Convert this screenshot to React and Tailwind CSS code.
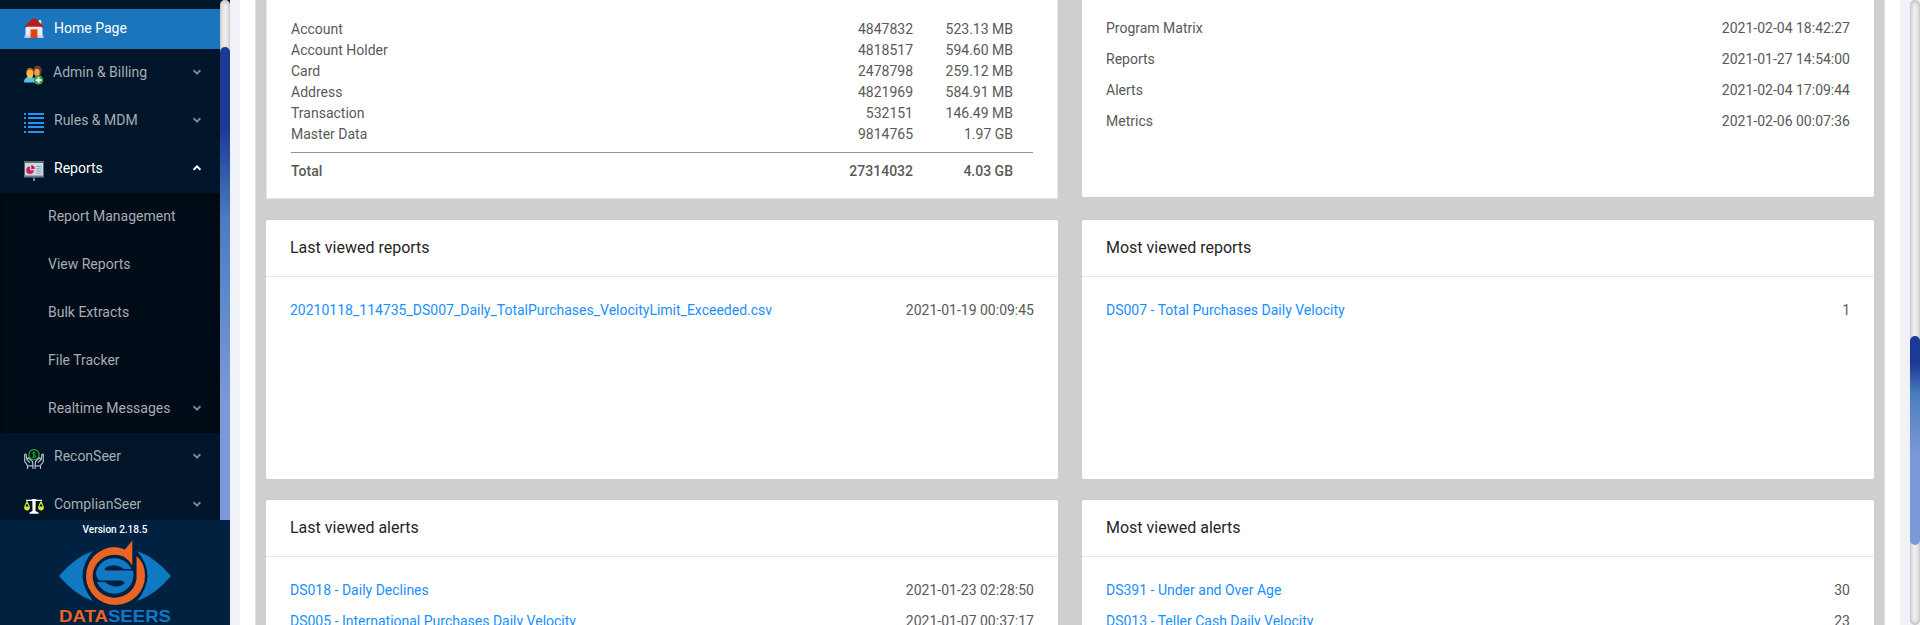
import React from "react";

function HomeIcon() {
  return (
    <svg viewBox="0 0 20 20" className="h-5 w-5 shrink-0">
      <rect x="14.800" y="2" width="2.400" height="6" fill="#d9dcf0" />
      <path d="M1.500 10 10 2l8.500 8v9.500h-17z" fill="#e9ebf6" />
      <rect x="0.500" y="17.500" width="19" height="2.500" fill="#c5c9ea" />
      <path d="M0 8.800 8.500.8Q10-.4 11.500.8L20 8.800z" fill="#b71c1c" />
      <rect x="6.500" y="11.300" width="7" height="8.700" fill="#e65100" />
      <rect x="8" y="12.600" width="4" height="7.400" fill="#d84315" />
    </svg>
  );
}

function UsersIcon() {
  return (
    <svg viewBox="0 0 20 20" className="h-5 w-5 shrink-0">
      <path d="M10 16q0-5 4-5h1q4 0 4 5z" fill="#1976d2" />
      <ellipse cx="13.500" cy="6" rx="4.300" ry="5.500" fill="#6d3b22" />
      <ellipse cx="13" cy="7.500" rx="2.700" ry="3.700" fill="#f0a050" />
      <path d="M0 17.500q0-5 4-5.500h3q5 .5 5 5.500z" fill="#4fc3f7" />
      <ellipse cx="6" cy="7.500" rx="4" ry="4.700" fill="#a86519" />
      <ellipse cx="6" cy="9" rx="3.200" ry="4.200" fill="#ffb74d" />
      <circle cx="14.500" cy="15" r="4.700" fill="#43a047" />
      <path d="M13.700 12.200h1.700v2h2v1.700h-2v2h-1.700v-2h-2v-1.700h2z" fill="#fff" />
    </svg>
  );
}

function ListIcon() {
  return (
    <svg viewBox="0 0 20 20" className="h-5 w-5 shrink-0">
      {[0, 4, 9, 13, 18].map((y) => (
        <g key={y} fill="#2196f3">
          <rect x="0" y={y} width="2" height="2" />
          <rect x="4" y={y} width="16" height="2" />
        </g>
      ))}
    </svg>
  );
}

function ReportIcon() {
  return (
    <svg viewBox="0 0 20 20" className="h-5 w-5 shrink-0">
      <rect x="9.200" y="15" width="1.600" height="3" fill="#546e7a" />
      <rect x="9" y="17.700" width="2" height="2.300" fill="#78909c" />
      <rect x="0.600" y="1" width="18.800" height="15" fill="#cfd8dc" />
      <rect x="0" y="0" width="20" height="2" fill="#546e7a" />
      <rect x="0" y="14.500" width="20" height="2" fill="#607d8b" />
      <path d="M6 5.500a3.800 3.800 0 1 0 3.800 3.800H6z" fill="#d81b60" />
      <path d="M7.200 4.200a3.800 3.800 0 0 1 3.600 3.800H7.200z" fill="#c2185b" />
      <path d="M12.300 5.500h5M12.300 7.800h5M12.300 10h5M12.300 12.200h5" stroke="#90a4ae" strokeWidth="1" />
    </svg>
  );
}

function HandsIcon() {
  return (
    <svg viewBox="0 0 20 20" className="h-5 w-5 shrink-0" fill="none">
      <circle cx="10" cy="5.700" r="5.100" stroke="#2ba32b" strokeWidth="1.300" />
      <path
        d="M11.600 3.700q-3.200-1.200-3.200.5c0 1.500 3.300 1.200 3.300 2.900 0 1.600-2.100 1.500-3.500.8M10 2.500v6.500"
        stroke="#2ba32b"
        strokeWidth="1"
      />
      <path
        d="M3.500 20v-3.500L.7 12.500V5.500Q1.800 4.500 2.200 6l.6 4.500 3.200 3.200M3.500 10l1-1.200 4 3.700.4 4V20M3.500 16.800h5.400M16.500 20v-3.500l2.800-4V5.500q-1.100-1-1.500.5l-.6 4.500L14 13.700M16.500 10l-1-1.200-4 3.700-.4 4V20M11.100 16.800h5.400"
        stroke="#b4bcc5"
        strokeWidth="1.200"
      />
    </svg>
  );
}

function ScalesIcon() {
  return (
    <svg viewBox="0 0 20 20" className="h-5 w-5 shrink-0" fill="none">
      <path d="M2 2.800h5L8.500 2h3L13 2.800h5v1.200h-6.300L11.500 14l3 1.500v1.200h-9v-1.200l3-1.500L8.300 4H2z" fill="#fff" />
      <path d="M3 4.500.8 9.800M3 4.500l2.200 5.300M17 4.500l-2.200 5.300M17 4.500l2.200 5.300" stroke="#cddc39" strokeWidth="1.200" />
      <path d="M0 9.500h6Q6 13.500 3 13.500T0 9.500zM14 9.500h6q0 4-3 4t-3-4z" fill="#dbe82c" />
    </svg>
  );
}

function Chevron({ up }) {
  return (
    <svg viewBox="0 0 8 6" className="mr-[19px] h-1.5 w-2 shrink-0" fill="none">
      <path
        d={up ? "M.6 4.800 4 1.400l3.400 3.400" : "M.6 1.200 4 4.600l3.400-3.400"}
        stroke={up ? "#ffffff" : "#7d8791"}
        strokeWidth="2"
      />
    </svg>
  );
}

function MenuItem({ icon, label, open, tight }) {
  return (
    <div className={`flex h-12 items-center pl-6 ${open ? "text-white" : "text-[#a6adb4]"}`}>
      <span className="pt-1.5">{icon}</span>
      <span className={`flex-1 ${tight ? "ml-[9px]" : "ml-2.5"}`}>{label}</span>
      <Chevron up={open} />
    </div>
  );
}

function SubItem({ label, expandable }) {
  return (
    <div className="flex h-12 items-center pl-12 text-[#a6adb4]">
      <span className="flex-1">{label}</span>
      {expandable && <Chevron />}
    </div>
  );
}

function Logo() {
  return (
    <svg viewBox="0 0 114 86" className="h-[86px] w-[114px]">
      <path d="M1 37Q17 18 35 12Q14 36 35 62Q17 56 1 37z" fill="#1179c4" />
      <path d="M113 37Q97 18 79 12Q100 36 79 62Q97 56 113 37z" fill="#1179c4" />
      <path
        d="M74.300 26.500V1.500L67 10.500Q61 8 56 8A29.500 29 0 1 0 87 37Q87 24 78.500 17v18A22 21.500 0 1 1 66 17.800Q71 21 74.300 26.500z"
        fill="#ea6424"
      />
      <path
        d="M38 33A19 19 0 0 1 73.500 30H66Q56 23 47 29Q46 31 49 31.500H75A19 19 0 0 1 75 40A19 19 0 0 1 39 43H47Q57 51 66 45Q67 42 63 41.500H42Q38 40 38 33z"
        fill="#1179c4"
      />
      <text
        x="1"
        y="83"
        fontFamily="'Liberation Sans', sans-serif"
        fontWeight="700"
        fontSize="17"
        textLength="112"
        lengthAdjust="spacingAndGlyphs"
      >
        <tspan fill="#ea6424">DATA</tspan>
        <tspan fill="#1179c4">SEERS</tspan>
      </text>
    </svg>
  );
}

function Sidebar() {
  return (
    <aside className="flex h-full w-[230px] shrink-0 flex-col bg-[#001529]">
      <div className="flex h-[520px] overflow-hidden">
        <nav className="w-[220px] shrink-0 pt-[9px]">
          <div className="mb-[-1px] flex h-10 items-center bg-[#1b75bc] pb-0.5 pl-6 text-white">
            <HomeIcon />
            <span className="ml-2.5">Home Page</span>
          </div>
          <MenuItem icon={<UsersIcon />} label="Admin & Billing" tight />
          <MenuItem icon={<ListIcon />} label="Rules & MDM" />
          <MenuItem icon={<ReportIcon />} label="Reports" open />
          <div className="mt-px mb-[-1px] flow-root h-60 bg-[#000c17] shadow-[inset_0_2px_8px_rgba(0,0,0,0.45)]">
            <div className="mt-[-1px]">
              <SubItem label="Report Management" />
              <SubItem label="View Reports" />
              <SubItem label="Bulk Extracts" />
              <SubItem label="File Tracker" />
              <SubItem label="Realtime Messages" expandable />
            </div>
          </div>
          <MenuItem icon={<HandsIcon />} label="ReconSeer" />
          <MenuItem icon={<ScalesIcon />} label="ComplianSeer" />
        </nav>
        <div className="h-[820px] w-2.5 rounded-[10px] bg-[#f0f0f0] pt-[47px] shadow-[inset_0_0_5px_#a0a0a0]">
          <div className="h-[620px] rounded-[10px] bg-[linear-gradient(to_bottom,#1c3996_0%,#1c3996_13%,#4a7ebf_28%,#7b98d8_57%,#7b98d8_100%)]" />
        </div>
      </div>
      <div className="flex flex-1 flex-col items-center bg-[#00213f] pt-px">
        <div className="h-[18px] text-[10px] leading-[17px] font-medium text-white">Version 2.18.5</div>
        <Logo />
      </div>
    </aside>
  );
}

const storage = [
  ["Account", "4847832", "523.13 MB"],
  ["Account Holder", "4818517", "594.60 MB"],
  ["Card", "2478798", "259.12 MB"],
  ["Address", "4821969", "584.91 MB"],
  ["Transaction", "532151", "146.49 MB"],
  ["Master Data", "9814765", "1.97 GB"],
];

const updates = [
  ["Program Matrix", "2021-02-04 18:42:27"],
  ["Reports", "2021-01-27 14:54:00"],
  ["Alerts", "2021-02-04 17:09:44"],
  ["Metrics", "2021-02-06 00:07:36"],
];

function StorageRow({ row, bold }) {
  return (
    <div className={`flex h-[21px] items-center pr-5 ${bold ? "font-medium" : ""}`}>
      <span className="flex-1">{row[0]}</span>
      <span className="w-[120px] text-right">{row[1]}</span>
      <span className="w-[100px] text-right">{row[2]}</span>
    </div>
  );
}

function Rows({ rows, link }) {
  return rows.map(([label, value]) => (
    <div key={label} className="flex h-[31px] items-start justify-between leading-[21px]">
      <span className={link ? "text-[#1890ff]" : ""}>{label}</span>
      <span>{value}</span>
    </div>
  ));
}

function ListCard({ title, rows, className }) {
  return (
    <section className={`w-[792px] shrink-0 overflow-hidden rounded-[2px] bg-white ${className}`}>
      <h2 className="flex h-[57px] items-center border-b border-[#e8e8e8] px-6 text-base text-[#262626]">
        {title}
      </h2>
      <div className="px-6 pt-[23px]">
        <Rows rows={rows} link />
      </div>
    </section>
  );
}

export default function App() {
  return (
    <div className="flex h-[625px] w-[1920px] overflow-hidden bg-[#f0f2f7] text-sm font-normal text-[#595959] [font-family:Roboto,sans-serif]">
      <Sidebar />
      <main className="ml-2.5 h-full w-[1660px] shrink-0 bg-white px-[15px]">
        <div className="flex h-full flex-col overflow-hidden border-x border-[#dedede] bg-[#cfcfcf] px-2.5">
          <div className="flex h-[220px] shrink-0 items-start justify-between">
            <section className="h-[199px] w-[792px] rounded-b-[2px] border border-t-0 border-[#e8e8e8] bg-white pt-[18px] pr-6 pl-6">
              {storage.map((row) => (
                <StorageRow key={row[0]} row={row} />
              ))}
              <div className="mt-2 mb-[7px] h-px bg-[#929292]" />
              <StorageRow row={["Total", "27314032", "4.03 GB"]} bold />
            </section>
            <section className="h-[197px] w-[792px] rounded-b-[2px] bg-white px-6 pt-[18px]">
              <Rows rows={updates} />
            </section>
          </div>
          <div className="flex h-[280px] shrink-0 items-start justify-between">
            <ListCard
              className="h-[259px]"
              title="Last viewed reports"
              rows={[["20210118_114735_DS007_Daily_TotalPurchases_VelocityLimit_Exceeded.csv", "2021-01-19 00:09:45"]]}
            />
            <ListCard
              className="h-[259px]"
              title="Most viewed reports"
              rows={[["DS007 - Total Purchases Daily Velocity", "1"]]}
            />
          </div>
          <div className="flex shrink-0 items-start justify-between">
            <ListCard
              className="h-[259px]"
              title="Last viewed alerts"
              rows={[
                ["DS018 - Daily Declines", "2021-01-23 02:28:50"],
                ["DS005 - International Purchases Daily Velocity", "2021-01-07 00:37:17"],
              ]}
            />
            <ListCard
              className="h-[259px]"
              title="Most viewed alerts"
              rows={[
                ["DS391 - Under and Over Age", "30"],
                ["DS013 - Teller Cash Daily Velocity", "23"],
              ]}
            />
          </div>
        </div>
      </main>
      <div className="ml-2.5 h-full w-2.5 rounded-[10px] bg-[#f0f0f0] pt-[336px] shadow-[inset_0_0_5px_#a0a0a0]">
        <div className="h-[209px] rounded-[10px] bg-[linear-gradient(to_bottom,#1c3996_0%,#1c3996_13%,#4a7ebf_28%,#7b98d8_57%,#7b98d8_100%)]" />
      </div>
    </div>
  );
}
